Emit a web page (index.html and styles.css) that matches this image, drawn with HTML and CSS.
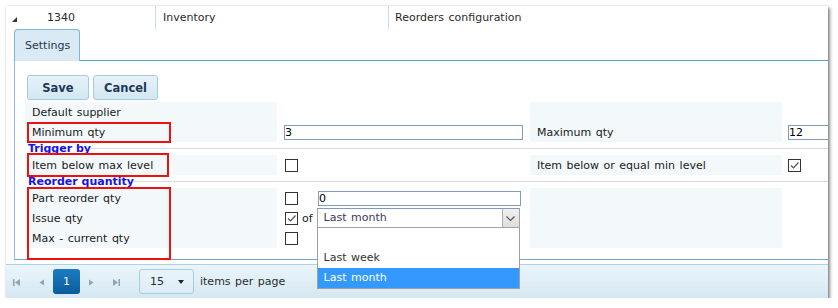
FILE: index.html
```html
<!DOCTYPE html>
<html lang="en">
  <head>
    <meta charset="UTF-8" />
    <title>Reorders configuration</title>
    <link rel="stylesheet" href="styles.css">
  </head>

  <body>
    <div class="grid">
      <!-- Master row -->
      <div class="master">
        <div class="cell-id">
          <svg class="expand" width="5" height="5" viewBox="0 0 5 5"><path d="M5 0V5H0Z" /></svg>
          <span class="id">1340</span>
        </div>
        <div class="cell-module">Inventory</div>
        <div class="cell-name">Reorders configuration</div>
      </div>

      <!-- Detail row -->
      <div class="detail">
        <div class="tabs">
          <div class="tab">Settings</div>
        </div>

        <div class="panel">
          <div class="toolbar">
            <button class="btn">Save</button>
            <button class="btn">Cancel</button>
          </div>

          <div class="form">
            <div class="fields">
              <div class="label">Default supplier</div>
              <div class="value"></div>
              <div class="label"></div>
              <div class="value-end"></div>

              <div class="label">Minimum qty</div>
              <div class="value"><input class="textbox" type="text" value="3" /></div>
              <div class="label">Maximum qty</div>
              <div class="value-end"><input class="textbox short" type="text" value="12" /></div>
            </div>

            <div class="group-head"><span>Trigger by</span><i></i></div>

            <div class="fields">
              <div class="label">Item below max level</div>
              <div class="value"><span class="check"></span></div>
              <div class="label">Item below or equal min level</div>
              <div class="value-end">
                <span class="check">
                  <svg width="11" height="11" viewBox="0 0 11 11"><path d="M2 5.5L4.5 8L9.5 2.5" /></svg>
                </span>
              </div>
            </div>

            <div class="group-head"><span>Reorder quantity</span><i></i></div>

            <div class="fields">
              <div class="label">Part reorder qty</div>
              <div class="value">
                <span class="check"></span>
                <input class="textbox part" type="text" value="0" />
              </div>
              <div class="label"></div>
              <div class="value-end"></div>

              <div class="label">Issue qty</div>
              <div class="value">
                <span class="check">
                  <svg width="11" height="11" viewBox="0 0 11 11"><path d="M2 5.5L4.5 8L9.5 2.5" /></svg>
                </span>
                <span class="of">of</span>
                <div class="select">
                  <span class="select-text">Last month</span>
                  <span class="select-btn">
                    <svg width="9" height="5" viewBox="0 0 9 5"><path d="M0.5 0.5L4.5 4.5L8.5 0.5" /></svg>
                  </span>
                  <div class="popup">
                    <div class="opt"></div>
                    <div class="opt">Last week</div>
                    <div class="opt selected">Last month</div>
                  </div>
                </div>
              </div>
              <div class="label"></div>
              <div class="value-end"></div>

              <div class="label">Max - current qty</div>
              <div class="value"><span class="check"></span></div>
              <div class="label"></div>
              <div class="value-end"></div>
            </div>

            <!-- highlight marks -->
            <div class="mark mark-min"></div>
            <div class="mark mark-trigger"></div>
            <div class="mark mark-reorder"></div>
          </div>
        </div>
      </div>

      <!-- Pager -->
      <div class="pager">
        <svg class="nav nav-first" width="7" height="7" viewBox="0 0 7 7"><rect x="0" y="0" width="1.5" height="7" /><path d="M7 0L2 3.5L7 7Z" /></svg>
        <svg class="nav nav-prev" width="5" height="7" viewBox="0 0 5 7"><path d="M5 0.5L0.5 3.5L5 6.5Z" /></svg>
        <span class="page-num">1</span>
        <svg class="nav nav-next" width="5" height="7" viewBox="0 0 5 7"><path d="M0 0.5L4.5 3.5L0 6.5Z" /></svg>
        <svg class="nav nav-last" width="7" height="7" viewBox="0 0 7 7"><path d="M0 0L5 3.5L0 7Z" /><rect x="5.5" y="0" width="1.5" height="7" /></svg>
        <div class="page-size">
          <span>15</span>
          <svg width="6" height="4" viewBox="0 0 6 4"><path d="M0 0H6L3 4Z" /></svg>
        </div>
        <span class="pager-label">items per page</span>
      </div>
    </div>
  </body>
</html>
```

FILE: styles.css
```css
* {
  box-sizing: border-box;
}

body {
  margin: 0;
  background: #fff;
  font-family: "DejaVu Sans", Verdana, sans-serif;
  font-size: 11px;
  word-spacing: 1px;
  color: #1a1a1a;
}

.grid {
  margin: 6px 0 0 6px;
  width: 822px;
  height: 292px;
  overflow: hidden;
  background: #fff;
  box-shadow: 2px 2px 3px rgba(0, 0, 0, 0.45), 0 0 2px rgba(0, 0, 0, 0.18);
}

/* master row */
.master {
  display: flex;
  height: 23px;
  line-height: 23px;
  color: #2b2b2b;
}

.cell-id {
  width: 149px;
  display: flex;
  align-items: center;
  padding-left: 6px;
}

.expand {
  fill: #333;
  margin-top: 3px;
}

.id {
  margin-left: 30px;
}

.cell-module {
  width: 233px;
  border-left: 1px solid #c6dce8;
  padding-left: 7px;
}

.cell-name {
  flex: 1;
  border-left: 1px solid #c6dce8;
  padding-left: 6px;
}

/* detail */
.detail {
  padding: 0 0 4px 8px;
}

.tabs {
  display: flex;
  align-items: flex-end;
  height: 32px;
  border-bottom: 1px solid #5ba6cc;
}

.tab {
  height: 32px;
  margin-bottom: -1px;
  padding: 0 9px 0 10px;
  line-height: 31px;
  border: 1px solid #7ab7d8;
  border-bottom: 0;
  border-radius: 4px 4px 0 0;
  background: #d9eaf4;
  color: #23384d;
}

.panel {
  border-left: 1px solid #8bbfdc;
  border-bottom: 1px solid #79a6c6;
  padding: 14px 0 11px 10px;
}

.toolbar {
  display: flex;
  gap: 4px;
  margin-left: 2px;
}

.btn {
  height: 25px;
  min-width: 62px;
  padding: 0 10px;
  border: 1px solid #a5cbe0;
  border-radius: 3px;
  background: linear-gradient(#e6f2f9, #d3e7f2);
  font: bold 11.5px "DejaVu Sans", Verdana, sans-serif;
  color: #1c3a56;
}

/* form */
.form {
  position: relative;
  margin-top: 2px;
}

/* rows sit above the group titles, hiding their descenders */
.fields {
  position: relative;
  display: grid;
  grid-template-columns: 252px 253px 252px 120px;
  grid-auto-rows: 20px;
}

.label {
  background: #f3f9fa;
  padding: 1px 0 0 7px;
  line-height: 20px;
  white-space: nowrap;
}

.value,
.value-end {
  display: flex;
  align-items: center;
  padding-left: 7px;
}

.value-end {
  padding-left: 6px;
}

.textbox {
  width: 239px;
  height: 15px;
  margin: 0;
  padding: 0;
  border: 1px solid #7f9db9;
  font: 11px "DejaVu Sans", Verdana, sans-serif;
  color: #000;
}

.textbox.short {
  width: 100px;
}

.textbox.part {
  width: 203px;
  margin-left: 20px;
}

.group-head {
  display: flex;
  height: 10px;
  margin: 1px 0 2px;
  padding-left: 3px;
  color: #1212ee;
  font-weight: bold;
  line-height: 11px;
  word-spacing: 0;
  white-space: nowrap;
}

.group-head i {
  flex: 1;
  height: 1px;
  margin-top: 5px;
  background: #dcdcdc;
}

.check {
  width: 13px;
  height: 13px;
  flex-shrink: 0;
  border: 1px solid #333;
  background: #fff;
  display: flex;
  align-items: center;
  justify-content: center;
}

.value .check {
  margin-left: 1px;
}

.check svg {
  fill: none;
  stroke: #555;
  stroke-width: 1.2;
}

.of {
  margin-left: 4px;
}

.select {
  position: relative;
  margin-left: 4px;
  width: 203px;
  height: 20px;
  display: flex;
  border: 1px solid #a3a3a3;
  border-top-color: #7f9db9;
  background: #fff;
}

.select-text {
  flex: 1;
  padding-left: 6px;
  line-height: 18px;
  color: #3b3860;
}

.select-btn {
  width: 17px;
  height: 18px;
  border-left: 1px solid #adadad;
  background: linear-gradient(#f0f0f0, #dedede);
  display: flex;
  align-items: center;
  justify-content: center;
}

.select-btn svg {
  fill: none;
  stroke: #555;
  stroke-width: 1.1;
}

.popup {
  position: absolute;
  top: calc(100% + 1px);
  left: -1px;
  width: 203px;
  background: #fff;
  border: 1px solid #a0a0a0;
  border-top: 0;
  z-index: 2;
}

.opt {
  height: 20px;
  line-height: 20px;
  padding-left: 6px;
  color: #333;
}

.opt.selected {
  background: #3399ff;
  color: #fff;
}

/* red highlight marks */
.mark {
  position: absolute;
  left: 2px;
  width: 144px;
  border: 2px solid #ee1111;
}

.mark-min {
  top: 20px;
  height: 21px;
}

.mark-trigger {
  top: 51px;
  width: 142px;
  height: 24px;
}

.mark-reorder {
  top: 85px;
  height: 73px;
}

/* pager */
.pager {
  display: flex;
  align-items: center;
  height: 34px;
  border-top: 1px solid #a8d2e7;
  background: linear-gradient(#ebf5fa, #d4e7f2);
  padding-left: 7px;
  color: #2d2d2d;
}

.nav {
  fill: #8ea3b3;
  margin-top: 2px;
}

.nav-first {
  margin-right: 19px;
}

.nav-prev {
  margin-right: 9px;
}

.nav-next {
  margin-left: 9px;
  margin-right: 19px;
}

.nav-last {
  margin-right: 19px;
}

.page-num {
  width: 27px;
  height: 25px;
  border-radius: 3px;
  background: linear-gradient(#1b7cc1, #0a5b9b);
  color: #fff;
  text-align: center;
  line-height: 25px;
}

.page-size {
  width: 55px;
  height: 25px;
  display: flex;
  align-items: center;
  padding-left: 10px;
  border: 1px solid #a7cde1;
  border-radius: 3px;
  background: linear-gradient(#eaf4fa, #dcecf5);
}

.page-size svg {
  margin-left: auto;
  margin-right: 9px;
  fill: #222;
}

.pager-label {
  margin-left: 6px;
}
```
